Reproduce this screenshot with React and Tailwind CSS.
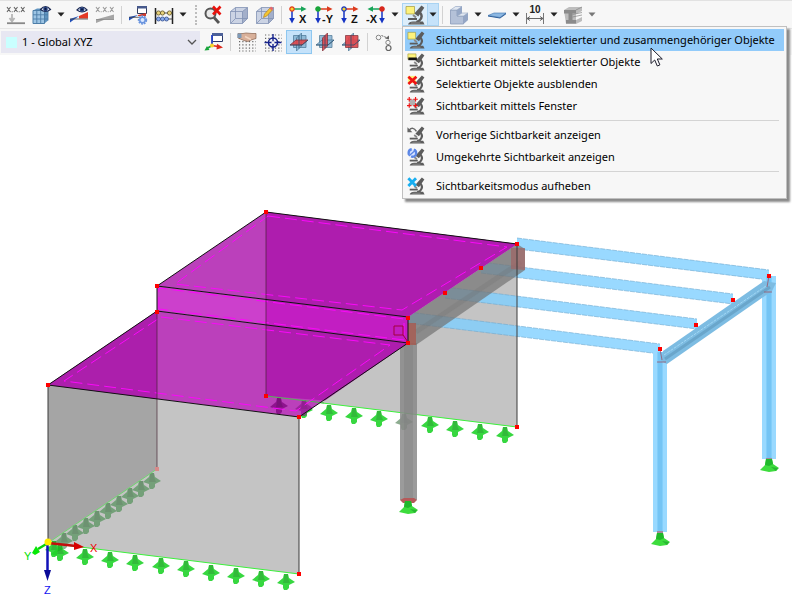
import React, { useState } from 'react';

// ─── TOOLBAR ICONS ────────────────────────────────────────────────────────────
const Svg = ({ children, size = 'size-5' }) => (
  <svg viewBox="0 0 20 20" className={`${size} shrink-0 block`} fill="none" aria-hidden="true">{children}</svg>
);

const Caret = ({ color = '#222' }) => (
  <svg viewBox="0 0 8 5" className="w-2 h-[5px] block" aria-hidden="true"><path d="M0.5 0.5h7L4 4.5z" fill={color} /></svg>
);

const Eye = ({ x, y }) => (
  <g transform={`translate(${x} ${y})`}>
    <path d="M0 4Q5 -2 10 4Q5 8 0 4z" fill="#dfe6f5" stroke="#1d2b55" strokeWidth="1.2" />
    <circle cx="5" cy="3.6" r="2.3" fill="#25407f" />
    <circle cx="5" cy="3.4" r="0.9" fill="#0b1435" />
  </g>
);

const Crosses = ({ color }) => (
  <g stroke={color} strokeWidth="1.1">
    <path d="M1 2l3.500 5M4.500 2L1 7M8 2l3.500 5M11.500 2L8 7M15 2l3.500 5M18.500 2L15 7" />
    <path d="M5.700 6.700h1M12.700 6.700h1" />
  </g>
);

const IconLoadValues = () => (
  <Svg>
    <Crosses color="#666" />
    <path d="M6 9v6M3.500 13L6 16.500 8.500 13" stroke="#b5b5b5" strokeWidth="1.800" />
    <path d="M1 18.200h18" stroke="#888" strokeWidth="1.800" />
  </Svg>
);

const IconGridEye = () => (
  <Svg>
    <path d="M1 5.500l4-2h11v12l-3.500 3H1z" fill="#5f93bf" />
    <path d="M1 5.500h11.500v13H1z" fill="#9cc4e4" stroke="#4d7ea8" />
    <path d="M4.800 5.500v13M8.700 5.500v13M1 9.800h15M1 14h15M16 4v11.500" stroke="#4d7ea8" strokeWidth="0.900" />
    <Eye x="8.500" y="0.500" />
  </Svg>
);

const IconResultEye = () => (
  <Svg>
    <path d="M1 17.500V14L10 11z" fill="#2250b8" />
    <path d="M10 11l9-4v6.500H10z" fill="#e33a26" />
    <path d="M1 14h18" stroke="#444" strokeWidth="0.800" />
    <Eye x="8" y="1" />
  </Svg>
);

const IconResultValues = () => (
  <Svg>
    <Crosses color="#9a9a9a" />
    <path d="M1 18V14.500L19 9.500v5H10z" fill="#a5a5a5" />
    <path d="M1 14.500h18" stroke="#888" strokeWidth="0.800" />
  </Svg>
);

const IconResultSettings = () => (
  <Svg>
    <path d="M9.500 1.500h9v7h-9z" fill="#fff" stroke="#333c5c" />
    <path d="M9 1h10v2.500H9z" fill="#46598c" />
    <path d="M1 15.500V12l9-2z" fill="#2250b8" />
    <path d="M10 10l8-2v3h-8z" fill="#cf3b2c" />
    <path d="M1 12.300h12" stroke="#444" strokeWidth="0.800" />
    <circle cx="14.500" cy="15" r="3.500" fill="#dbe8ff" stroke="#6a94de" strokeWidth="2.400" strokeDasharray="1.700 0.800" />
    <circle cx="14.500" cy="15" r="2.700" stroke="#6a94de" strokeWidth="1.300" />
  </Svg>
);

const IconAbacus = () => (
  <Svg>
    <path d="M1.500 3v16M18.500 3v16" stroke="#222" strokeWidth="1.500" />
    <path d="M1 8h18M1 14h18" stroke="#333" strokeWidth="0.900" />
    {[4.5, 8.5, 15.5].map(x => <circle key={x} cx={x} cy="8" r="2.100" fill="#e8d27a" stroke="#5e5224" strokeWidth="0.800" />)}
    {[4.5, 8.5, 12.5].map(x => <circle key={x} cx={x} cy="14" r="2" fill="#86a8ec" stroke="#35508f" strokeWidth="0.800" />)}
  </Svg>
);

const IconZoomOff = () => (
  <Svg>
    <circle cx="7.500" cy="8.500" r="5" fill="#e9e9e9" stroke="#555" strokeWidth="2" />
    <path d="M11 12.500l5 5.500" stroke="#555" strokeWidth="2.800" />
    <path d="M10 1.500l7.500 8M17.500 1.500L10 9.500" stroke="#e8120c" strokeWidth="2.600" />
  </Svg>
);

const Cube = () => (
  <>
    <path d="M1.500 6l5-3.500H18.500v11l-5 5h-12z" fill="#cbd3e4" />
    <path d="M13.500 6.500l5-4v11l-5 5z" fill="#a3afca" />
    <path d="M1.500 6.500h12v12h-12zM1.500 6.500l5-4h12v11l-5 5M13.500 6.500l5-4M6.500 2.500v11M1.500 18.500l5-5h12" stroke="#8292b4" strokeWidth="0.800" />
  </>
);

const IconCube = () => <Svg><Cube /></Svg>;

const IconCubeEdit = () => (
  <Svg>
    <Cube />
    <path d="M8.500 12.500l1-3.500 5.500-6 2.300 2-5.500 6z" fill="#f5c531" stroke="#a97814" strokeWidth="0.600" />
    <path d="M14.500 3.500l1.500-2 2.400 2-1.600 2z" fill="#e9686a" />
  </Svg>
);

// Small coordinate tripod used by the view direction buttons
const IconView = ({ label, h = '#18a558', dot = '#e33a1c', ring = dot, flip }) => (
  <Svg>
    <g transform={flip ? 'translate(20 0) scale(-1 1)' : undefined}>
      <path d="M4 4h10" stroke={h} strokeWidth="1.500" />
      <path d="M13 1.200l5.500 2.800-5.500 2.800z" fill={h} />
      <path d="M4 4v10" stroke="#1533c4" strokeWidth="1.500" />
      <path d="M1.200 13h5.600L4 18.500z" fill="#1533c4" />
      <circle cx="4" cy="4" r="2.200" fill={dot} stroke={ring} strokeWidth="1.200" />
    </g>
    <text x={flip ? 0 : label.length > 1 ? 8 : 11} y="18" fontSize="11" fontWeight="bold" fill="#111"
      fontFamily="Liberation Sans, sans-serif">{label}</text>
  </Svg>
);

const Microscope = () => (
  <g>
    <path d="M16.500 0.500l2.800 2.300-6 8.700-4-3z" fill="#5c5c5c" />
    <path d="M15 7.500q3.500 4-0.500 8l-3 1.500" stroke="#5c5c5c" strokeWidth="2.400" />
    <path d="M8 10l3 2.500" stroke="#8a8a8a" strokeWidth="2" />
    <path d="M3 14h9" stroke="#5c5c5c" strokeWidth="2" />
    <path d="M3 19.500q1-3 5-3h10l1.500 3z" fill="#5c5c5c" />
    <path d="M6 18h9" stroke="#999" strokeWidth="0.800" />
  </g>
);

const IconVisibility = ({ kind = 'related', size }) => (
  <Svg size={size}>
    <Microscope />
    {kind === 'related' && <path d="M1 1.500h8.500v7.500H1z" fill="#fdf27c" stroke="#a39a3c" strokeWidth="0.700" />}
    {kind === 'selected' && (
      <>
        <path d="M1 1h9v6H1z" fill="#fdf27c" stroke="#a39a3c" strokeWidth="0.700" />
        <path d="M1.500 5h9.500v3H1.500z" fill="#111" />
      </>
    )}
    {kind === 'hide' && (
      <>
        <path d="M1 1h9v8H1z" fill="#fdf27c" />
        <path d="M1.500 2l9 8M10.500 2l-9 8" stroke="#f01414" strokeWidth="3" />
      </>
    )}
    {kind === 'window' && (
      <>
        <path d="M2.500 2.500h7v7h-7z" fill="#b0b0b0" />
        <path d="M0 2.500h5M2.500 0v5M7 2.500h5M9.500 0v5M0 9.500h5M2.500 7v5M7 9.500h5M9.500 7v5" stroke="#f01414" strokeWidth="1.300" />
      </>
    )}
    {kind === 'previous' && (
      <>
        <path d="M2.500 4.500q4-4.500 8 1.500" stroke="#666" strokeWidth="1.600" />
        <path d="M0.500 1.500v5.500h5.500z" fill="#666" />
      </>
    )}
    {kind === 'invert' && (
      <>
        <circle cx="6" cy="5.500" r="4.200" fill="#d5e2ff" stroke="#5b86e6" strokeWidth="2.600" strokeDasharray="8 2.500" />
        <path d="M2 9L10 2" stroke="#5b86e6" strokeWidth="1.500" />
      </>
    )}
    {kind === 'cancel' && <path d="M1.500 1.500l8.500 8.500M10 1.500L1.500 10" stroke="#18aef0" strokeWidth="3.200" />}
  </Svg>
);

const IconStep = () => (
  <Svg>
    <path d="M1.500 5l5-3.500H13v6.500h6v7l-4.500 4h-13z" fill="#cfd8e6" />
    <path d="M1.500 5H8v6h6.500v8h-13z" fill="#b4c1d8" stroke="#8b9cba" strokeWidth="0.800" />
    <path d="M1.500 5l5-3.500H13L8 5zM8 11l5-3h6l-4.500 3z" fill="#e0e7f1" stroke="#94a5c1" strokeWidth="0.600" />
    <path d="M8 5l5-3.500V8l-5 3zM14.500 11L19 8v7l-4.500 4z" fill="#94a6c5" />
  </Svg>
);

const IconPlane = () => (
  <Svg>
    <path d="M1 10.500L7 8h12l-6 4.500z" fill="#8db8e2" />
    <path d="M1 10.500L7 8h12l-6 4.500z" stroke="#3b73af" strokeWidth="0.600" />
    <path d="M1 10.500l12 2 6-4.500v1.200L13 13.500 1 11.500z" fill="#2d5f9b" />
  </Svg>
);

const IconDimension = () => (
  <Svg>
    <text x="10" y="8" fontSize="10" fontWeight="bold" textAnchor="middle" fill="#222"
      fontFamily="Liberation Sans, sans-serif">10</text>
    <path d="M1.500 8v11M18.500 8v11" stroke="#777" />
    <path d="M2 13.500h16M5 11.500l-3 2 3 2M15 11.500l3 2-3 2" stroke="#666" />
  </Svg>
);

const IconSection = () => (
  <Svg>
    <path d="M1 5l5-3h13v4l-6 3v6l6-3v4l-6 3H3z" fill="#bdbdbd" />
    <path d="M1 5h12v3.500H9.500V15H13v3.500H3V15h2.500V8.500H1z" fill="#8b8b8b" />
    <path d="M13 5l6-3M9.500 9.500l9.500-2M9.500 12l9.500-2" stroke="#858585" strokeWidth="0.700" />
  </Svg>
);

const IconAxesWindow = () => (
  <Svg>
    <path d="M8.500 1.500h10v8h-10z" fill="#fff" stroke="#2c3a6b" />
    <path d="M8 1h11v3H8z" fill="#4d6199" />
    <path d="M8 3v11" stroke="#2743c4" strokeWidth="1.800" />
    <path d="M8 13.500l-5 3" stroke="#18a53a" strokeWidth="1.600" />
    <path d="M0.500 18.500l5-0.500-2.500-4z" fill="#18a53a" />
    <path d="M8 13.500l6 1" stroke="#dc2a1c" strokeWidth="1.600" />
    <path d="M13 11.800l6 3.700-6.500 2z" fill="#dc2a1c" />
    <circle cx="8" cy="13.500" r="2" fill="#f7d52c" />
  </Svg>
);

const Dots = () => (
  <g stroke="#666" strokeWidth="1.200" strokeDasharray="1.200 2.100">
    <path d="M2 3h17M2 6.300h17M2 9.600h17M2 12.900h17M2 16.200h17M2 19h17" />
  </g>
);

const IconGridHand = () => (
  <Svg>
    <Dots />
    <path d="M1 1.500h5l3-0.500 6 0.500h4v5l-5 1.500-3 1.500-4-1-6-2.500z" fill="#d8b09a" stroke="#8a6450" strokeWidth="0.700" />
    <path d="M0.500 1.500h4v4.500h-4z" fill="#7e9bb8" />
    <path d="M8 4.500l6 3" stroke="#f2d5c2" strokeWidth="1.500" />
  </Svg>
);

const IconGridTarget = () => (
  <Svg>
    <Dots />
    <circle cx="10" cy="10.500" r="4.500" fill="#f7f7f7" stroke="#15228c" strokeWidth="1.500" />
    <path d="M10 2v17M1.500 10.500h17" stroke="#15228c" strokeWidth="1.400" />
    <circle cx="10" cy="10.500" r="1.500" fill="#f7f7f7" />
  </Svg>
);

// Work plane buttons, the red face is the active plane and goes on top
const FACES = {
  xz: 'M4.500 3.500H17v12H4.500z',
  yz: 'M7.500 6l5-5v13l-5 5z',
  xy: 'M1 13l6-5h12l-6 5z',
};

const IconPlaneAxis = ({ axis }) => (
  <Svg>
    {Object.keys(FACES).filter(k => k !== axis).map(k => (
      <path key={k} d={FACES[k]} fill="#86b2d2" stroke="#3f6d8e" strokeWidth="0.800" opacity="0.850" />
    ))}
    <path d={FACES[axis]} fill="#e0444a" stroke="#7c2a34" strokeWidth="0.800" opacity="0.900" />
    <path d="M1 13h12l6-5M10 3.500v13" stroke="#2d5270" strokeWidth="0.800" />
  </Svg>
);

const IconSnap = () => (
  <Svg>
    <circle cx="4.500" cy="5.500" r="2.300" stroke="#888" />
    <circle cx="14" cy="10.500" r="2.200" stroke="#888" />
    <circle cx="14.500" cy="16" r="2.500" stroke="#666" strokeWidth="1.200" />
    <path d="M7.500 3.500l6 2.500" stroke="#666" strokeDasharray="2 1" />
    <path d="M15 3.500v4l-4-1z" fill="#666" />
  </Svg>
);

const Cursor = () => (
  <svg viewBox="0 0 13 20" className="absolute left-[247px] top-5 w-[13px] h-5 pointer-events-none" aria-hidden="true">
    <path d="M1 1v15.500l3.700-3.500 2.600 6 2.600-1.100-2.600-5.900h5z" fill="#fff" stroke="#1a1a2a" />
  </svg>
);

// ─── TOOLBAR PARTS ────────────────────────────────────────────────────────────
const Tool = ({ label, caret, dim, children }) => (
  <div className="flex items-center shrink-0">
    <button type="button" aria-label={label} className="w-[26px] h-6 flex items-center justify-center">{children}</button>
    {caret && (
      <button type="button" aria-label={`${label} Optionen`} className="w-[11px] h-6 flex items-center justify-center">
        <Caret color={dim ? '#777' : '#222'} />
      </button>
    )}
  </div>
);

const Divider = () => <div className="w-px h-[18px] mx-[3px] bg-[#d2d2d2] shrink-0" />;

const MENU = [
  { kind: 'related',  label: 'Sichtbarkeit mittels selektierter und zusammengehöriger Objekte', active: true },
  { kind: 'selected', label: 'Sichtbarkeit mittels selektierter Objekte' },
  { kind: 'hide',     label: 'Selektierte Objekte ausblenden' },
  { kind: 'window',   label: 'Sichtbarkeit mittels Fenster' },
  null,
  { kind: 'previous', label: 'Vorherige Sichtbarkeit anzeigen' },
  { kind: 'invert',   label: 'Umgekehrte Sichtbarkeit anzeigen' },
  null,
  { kind: 'cancel',   label: 'Sichtbarkeitsmodus aufheben' },
];

const VisibilityMenu = () => (
  <div role="menu" className="absolute z-10 left-0 top-full w-[385px] bg-[#f7f7f7] border border-[#c0c0c0] px-[2px] pt-[2px] pb-px shadow-[3px_3px_2px_#8a8a8a]">
    {MENU.map((item, i) => item ? (
      <button key={item.kind} type="button" role="menuitem"
        className={`flex items-center gap-[11px] w-full h-[22px] pl-[2px] text-left whitespace-nowrap ${item.active ? 'bg-[#92cbfa]' : 'hover:bg-[#92cbfa]'}`}>
        <IconVisibility kind={item.kind} size="size-[18px]" />
        <span>{item.label}</span>
      </button>
    ) : (
      <div key={i} role="separator" className="h-px my-[3px] mx-[5px] bg-[#d4d4d4]" />
    ))}
    <Cursor />
  </div>
);

// ─── 3D MODEL ─────────────────────────────────────────────────────────────────
const LineSupport = ({ x, y, color = '#22d32c', opacity = 0.9 }) => (
  <g transform={`translate(${x} ${y})`} fill={color} opacity={opacity}>
    <path d="M-2 -7h4l1 4 6 4-6 3v3l-2 2h-3l-1-2v-3l-6-2 6-5z" />
    <path d="M-2 -7h4v4l2 5h-7l1-5z" fill="#000" opacity="0.150" />
  </g>
);

const BaseSupport = ({ x, y }) => (
  <g transform={`translate(${x} ${y})`}>
    <path d="M-3 -7h6l1 5 6 4-3 3-7 1-9-2 5-5z" fill="#3ddc3d" />
    <path d="M-3 -7h6l1 5-4 2-4-1z" fill="#1fb82a" />
    <path d="M2 1l7 1-2 3z" fill="#28b632" />
  </g>
);

const Node = ({ x, y }) => <rect x={x - 2} y={y - 2} width="4" height="4" fill="#fe0000" />;

const Purlin = ({ x, y }) => (
  <g>
    <path d={`M${x} ${y - 6}l252 32v10l-252-31z`} fill="#80d0ff" opacity="0.800" />
    <path d={`M${x} ${y - 6}l252 32M${x} ${y + 5}l252 31`} stroke="#6ea9cf" strokeDasharray="5 1" opacity="0.600" />
  </g>
);

const LEFT_SUPPORTS  = [[152, 480], [141, 488], [130, 495], [119, 503], [108, 510], [97, 518], [86, 525], [75, 532], [64, 540]];
const FRONT_SUPPORTS = [[60, 552], [85, 556], [110, 559], [135, 562], [161, 565], [186, 568], [211, 572], [236, 575], [261, 578], [286, 581]];
const BACK_SUPPORTS  = [[329, 412], [354, 415], [379, 418], [430, 424], [455, 428], [480, 431], [505, 434]];
const NODES = [[266, 212], [517, 244], [481, 268], [445, 293], [408, 318], [408, 343], [157, 286], [157, 312], [48, 385],
  [299, 417], [266, 396], [517, 427], [299, 574], [660, 349], [696, 325], [733, 300], [769, 276]];

const BlueColumn = ({ x, top, bottom }) => (
  <g>
    <rect x={x} y={top} width="14" height={bottom - top} fill="#99d9ff" />
    <rect x={x + 4} y={top} width="6" height={bottom - top} fill="#82cefa" />
    <rect x={x + 5} y={top} width="4" height={bottom - top} fill="#74c4f4" />
  </g>
);

const Model = () => (
  <svg viewBox="0 55 792 541" className="block w-full h-auto" fill="none" role="img" aria-label="3D-Modell">
    {/* Walls */}
    <path d="M266 212L517 244V427L266 396z" fill="#c4c4c4" />
    <path d="M48 385L299 417V574L48 543z" fill="#c4c4c4" />
    <path d="M48 385L157 311V469L48 543z" fill="#a5a5a5" />

    {/* Supports and support lines */}
    {BACK_SUPPORTS.map(([x, y]) => <LineSupport key={x} x={x} y={y} />)}
    <LineSupport x={404} y={421} color="#5e8a62" opacity={0.7} />
    <LineSupport x={304} y={409} />
    {LEFT_SUPPORTS.map(([x, y]) => <LineSupport key={x} x={x} y={y} color="#4a8e52" opacity={0.65} />)}
    <LineSupport x={54} y={548} />
    {FRONT_SUPPORTS.map(([x, y]) => <LineSupport key={x} x={x} y={y} />)}
    <path d="M266 396L517 427M48 543L299 574" stroke="#3cf03c" />
    <path d="M48 543L157 469" stroke="#6fd86f" />

    {/* Purlins */}
    <Purlin x={517} y={244} />
    <Purlin x={481} y={268} />
    <Purlin x={445} y={293} />
    <Purlin x={408} y={318} />

    {/* Steel column and edge beam */}
    <rect x="400" y="343" width="17" height="157" fill="#8a8a8a" opacity="0.850" />
    <rect x="404" y="343" width="9" height="157" fill="#7c7c7c" opacity="0.350" />
    <path d="M400 500l4-2h10l3 2-3 3h-11z" fill="#b55a5a" />
    <path d="M408 317L517 244l8 5v21L416 345l-8-2z" fill="#757575" opacity="0.720" />
    <path d="M416 332L521 262" stroke="#6a6a6a" strokeWidth="5" opacity="0.200" />
    <path d="M511 248h14v22l-14-1z" fill="#a06464" opacity="0.700" />
    <path d="M408 323h8v22h-8z" fill="#a85a50" opacity="0.800" />

    {/* Upper roof */}
    <path d="M266 212L517 244 408 317 157 286z" fill="#bb40bb" />
    <path d="M266 212L517 244 408 317 266 299.500z" fill="#ae1dae" />
    {/* Lower roof */}
    <path d="M157 311L408 343 299 417 48 385z" fill="#bb40bb" />
    <path d="M266 325L408 343 325 400.500 266 396z" fill="#ae1dae" />
    <path d="M157 311V399L48 385z" fill="#ac1fac" />
    {/* Step between both roofs */}
    <path d="M157 286L408 317V343L157 311z" fill="#cc40cc" />
    <path d="M266 299.500L408 317V343L266 325z" fill="#c21ec2" />
    <LineSupport x={279} y={405} color="#8a0f8a" />
    <LineSupport x={304} y={407} color="#8a0f8a" opacity={0.6} />
    <path d="M266 396L324 403" stroke="#55b055" />

    <g stroke="#fb08fb" strokeDasharray="12 5">
      <path d="M268 216L507 247 402 310 175 284zM159 309v-21L404 319v21z" />
      <path d="M161 317L390 345 296 411 64 381z" />
    </g>

    {/* Edges */}
    <path d="M266 212V396M157 311V469" stroke="#40202f" strokeOpacity="0.650" />
    <path d="M157 286L266 212 517 244M157 286L408 317V343L157 311zM157 311L48 385 299 417 408 343" stroke="#111" />
    <path d="M48 385V543M299 417V574M517 244V427" stroke="#3a3a3a" />
    <path d="M394 326h9v9h-9zM403 335l5 7" stroke="#a3003c" />

    {/* Carport frame */}
    <BlueColumn x={653} top={352} bottom={532} />
    <BlueColumn x={762} top={276} bottom={459} />
    <path d="M663 351L764 281l12 2-4 8L667 364l-6-3z" fill="#7dbce2" />
    <path d="M665 359L770 287" stroke="#6aa6cb" strokeWidth="3" />
    <path d="M664 355L766 286" stroke="#a3d8f5" strokeDasharray="3 1" />
    <path d="M660 349l2 11M769 276l-2 11M657 362h9M764 292h8" stroke="#9a5468" strokeWidth="0.800" />
    <path d="M657 531h6v4h-6zM766 458h6v4h-6z" fill="#a08a9a" />
    <BaseSupport x={408} y={508} />
    <BaseSupport x={660} y={540} />
    <BaseSupport x={769} y={466} />

    <rect x="155" y="467" width="4" height="4" fill="#d98a8a" />
    {NODES.map(([x, y]) => <Node key={`${x}-${y}`} x={x} y={y} />)}

    {/* Global axes */}
    <path d="M48 543L76 546" stroke="#c40d0d" strokeWidth="2.500" />
    <path d="M74 542L84 547 74 550z" fill="#d80000" />
    <path d="M48 543L38 549" stroke="#0ad00a" strokeWidth="2.500" />
    <path d="M32 553l4-7 4 6-5 3z" fill="#06e806" />
    <path d="M47.500 544V571" stroke="#1111b8" strokeWidth="2.500" />
    <path d="M44 570h7l-3.500 11z" fill="#0a0a98" />
    <circle cx="48" cy="542" r="3.500" fill="#ffee00" />
    <g fontSize="11" fontFamily="Liberation Sans, sans-serif">
      <text x="90" y="552" fill="#f00000">X</text>
      <text x="24" y="560" fill="#00e000">Y</text>
      <text x="44" y="594" fill="#1111f0">Z</text>
    </g>
  </svg>
);

// ─── APP ──────────────────────────────────────────────────────────────────────
const App = () => {
  const [open, setOpen] = useState(true);

  return (
    <div className="min-h-screen bg-white text-black text-[11px] leading-4 font-['Noto_Sans','Open_Sans',sans-serif]">

      {/* Main toolbar */}
      <div className="flex items-center h-7 pl-[3px] bg-[#f7f7f7] border-t border-[#e2e2e2]">
        <Tool label="Lastwerte"><IconLoadValues /></Tool>
        <Tool label="Ansicht" caret><IconGridEye /></Tool>
        <Tool label="Ergebnisse anzeigen"><IconResultEye /></Tool>
        <Tool label="Ergebniswerte"><IconResultValues /></Tool>
        <Divider />
        <Tool label="Ergebniseinstellungen"><IconResultSettings /></Tool>
        <Tool label="Ergebniskombination" caret><IconAbacus /></Tool>
        <div className="w-0 h-5 ml-[7px] mr-[3px] border-l-2 border-dotted border-[#bdbdbd] shrink-0" />
        <Tool label="Zoom aufheben"><IconZoomOff /></Tool>
        <Tool label="Isometrie"><IconCube /></Tool>
        <Tool label="Isometrie bearbeiten"><IconCubeEdit /></Tool>
        <Divider />
        <Tool label="Ansicht X"><IconView label="X" dot="#f7d52c" ring="#e33a1c" /></Tool>
        <Tool label="Ansicht -Y"><IconView label="-Y" h="#dc3a1c" dot="#18a53a" /></Tool>
        <Tool label="Ansicht Z"><IconView label="Z" dot="#f7d52c" ring="#1533c4" h="#dc3a1c" /></Tool>
        <Tool label="Ansicht -X" caret><IconView label="-X" dot="#d8281c" flip /></Tool>

        <div className="relative ml-[2px] h-[23px] flex items-center shrink-0">
          <button type="button" aria-label="Sichtbarkeit" className="w-[26px] h-[23px] flex items-center justify-center bg-[#dceefb] border border-[#a9d3f2]">
            <IconVisibility />
          </button>
          <button type="button" aria-label="Sichtbarkeit Menü" aria-expanded={open} onClick={() => setOpen(!open)}
            className="w-[11px] h-[23px] flex items-center justify-center bg-[#c5e2fa] border-y border-r border-[#a9d3f2]">
            <Caret />
          </button>
          {open && <VisibilityMenu />}
        </div>
        <Divider />
        <div className="flex gap-px">
          <Tool label="Darstellung" caret><IconStep /></Tool>
          <Tool label="Arbeitsebene" caret><IconPlane /></Tool>
          <Tool label="Bemaßung" caret><IconDimension /></Tool>
          <Tool label="Querschnitt" caret dim><IconSection /></Tool>
        </div>
      </div>

      {/* Coordinate system toolbar */}
      <div className="flex items-center h-[27px] pl-px bg-[#f7f7f7] border-t border-[#e6e6e6]">
        <div className="relative w-[199px] h-[22px] shrink-0 flex items-center bg-[#e7e7f2]">
          <span className="absolute left-[5px] size-[11px] bg-[#c9ffff]" />
          <select aria-label="Koordinatensystem" className="w-full h-full pl-[21px] pr-5 appearance-none bg-transparent outline-none">
            <option>1 - Global XYZ</option>
          </select>
          <svg viewBox="0 0 10 6" className="absolute right-[3px] w-[10px] h-[6px] pointer-events-none" fill="none" aria-hidden="true">
            <path d="M1 1l4 4 4-4" stroke="#555" strokeWidth="1.300" />
          </svg>
        </div>
        <div className="flex items-center ml-px">
          <Tool label="Koordinatensystem bearbeiten"><IconAxesWindow /></Tool>
          <Divider />
          <Tool label="Raster bearbeiten"><IconGridHand /></Tool>
          <Tool label="Rasterfang"><IconGridTarget /></Tool>
          <div className="bg-[#c5e2fa] outline outline-1 -outline-offset-1 outline-[#8ec7f0]">
            <Tool label="Arbeitsebene XY"><IconPlaneAxis axis="xy" /></Tool>
          </div>
          <Tool label="Arbeitsebene YZ"><IconPlaneAxis axis="yz" /></Tool>
          <Tool label="Arbeitsebene XZ"><IconPlaneAxis axis="xz" /></Tool>
          <Divider />
          <Tool label="Objektfang"><IconSnap /></Tool>
        </div>
      </div>

      <Model />
    </div>
  );
};

export default App;
